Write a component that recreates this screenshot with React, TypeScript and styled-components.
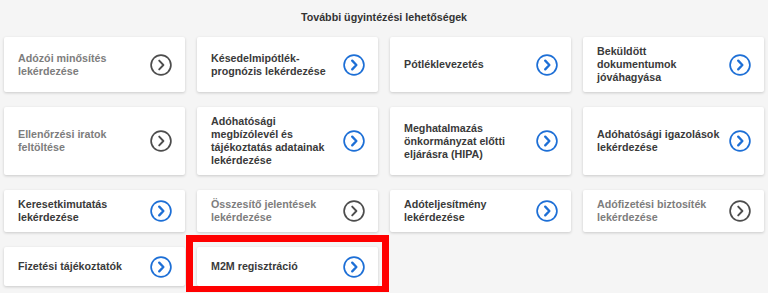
import React from 'react'
import styled, { createGlobalStyle } from 'styled-components'

const GlobalStyle = createGlobalStyle`
  html {
    overflow: hidden;
    background: #f5f5f5;
  }
  body {
    margin: 0;
    padding: 0;
    background: #f5f5f5;
    font-family: 'Liberation Sans', Arial, sans-serif;
  }
`

interface Service {
  label: string
  disabled?: boolean
  highlighted?: boolean
}

const services: Service[] = [
  { label: 'Adózói minősítés lekérdezése', disabled: true },
  { label: 'Késedelmipótlék-prognózis lekérdezése' },
  { label: 'Pótléklevezetés' },
  { label: 'Beküldött dokumentumok jóváhagyása' },
  { label: 'Ellenőrzési iratok feltöltése', disabled: true },
  { label: 'Adóhatósági megbízólevél és tájékoztatás adatainak lekérdezése' },
  { label: 'Meghatalmazás önkormányzat előtti eljárásra (HIPA)' },
  { label: 'Adóhatósági igazolások lekérdezése' },
  { label: 'Keresetkimutatás lekérdezése' },
  { label: 'Összesítő jelentések lekérdezése', disabled: true },
  { label: 'Adóteljesítmény lekérdezése' },
  { label: 'Adófizetési biztosíték lekérdezése', disabled: true },
  { label: 'Fizetési tájékoztatók' },
  { label: 'M2M regisztráció', highlighted: true }
]

const ArrowIcon = ({ disabled }: { disabled?: boolean }) => (
  <svg width="22" height="22" viewBox="0 0 22 22" fill="none">
    <circle cx="11" cy="11" r="9.9" stroke="currentColor" strokeWidth="1.7" />
    <path
      d="M9.2 6.6 L13.4 11 L9.2 15.4"
      stroke="currentColor"
      strokeWidth={disabled ? 1.9 : 2.3}
      strokeLinecap="round"
      strokeLinejoin="round"
    />
  </svg>
)

const App = () => (
  <>
    <GlobalStyle />
    <Page>
      <Title>További ügyintézési lehetőségek</Title>
      <Grid>
        {services.map((s) => (
          <Card key={s.label}>
            <CardLabel $disabled={s.disabled}>{s.label}</CardLabel>
            <IconWrap $disabled={s.disabled}>
              <ArrowIcon disabled={s.disabled} />
            </IconWrap>
            {s.highlighted && <HighlightFrame />}
          </Card>
        ))}
      </Grid>
    </Page>
  </>
)

const Page = styled.div`
  width: 768px;
  min-height: 293px;
  padding: 0 4px 6px;
  box-sizing: border-box;
`

const Title = styled.div`
  padding-top: 10px;
  margin-bottom: 13px;
  line-height: 14px;
  font-size: 10.7px;
  font-weight: 700;
  color: #333;
  text-align: center;
`

const Grid = styled.div`
  display: grid;
  grid-template-columns: repeat(4, 181px);
  column-gap: 12px;
  row-gap: 15px;
`

const Card = styled.div`
  position: relative;
  display: flex;
  align-items: center;
  justify-content: space-between;
  min-height: 39px;
  padding: 8px 13px 8px 14px;
  box-sizing: border-box;
  background: #fff;
  border-radius: 2px;
  box-shadow: 0 1px 3px rgba(0, 0, 0, 0.18);
  cursor: pointer;
`

// red annotation frame drawn over the highlighted card
const HighlightFrame = styled.div`
  position: absolute;
  left: -11px;
  right: -11px;
  top: -12px;
  bottom: -6px;
  border: 7px solid #ff0000;
  border-bottom-width: 6px;
  pointer-events: none;
`

const CardLabel = styled.div<{ $disabled?: boolean }>`
  max-width: 124px;
  font-size: 10.7px;
  line-height: 13px;
  font-weight: 700;
  color: ${(p) => (p.$disabled ? '#7d7d7d' : '#3a3a3a')};
`

const IconWrap = styled.div<{ $disabled?: boolean }>`
  flex: none;
  display: flex;
  width: 22px;
  height: 22px;
  color: ${(p) => (p.$disabled ? '#4d4d4d' : '#1d6fd6')};
`

export default App
